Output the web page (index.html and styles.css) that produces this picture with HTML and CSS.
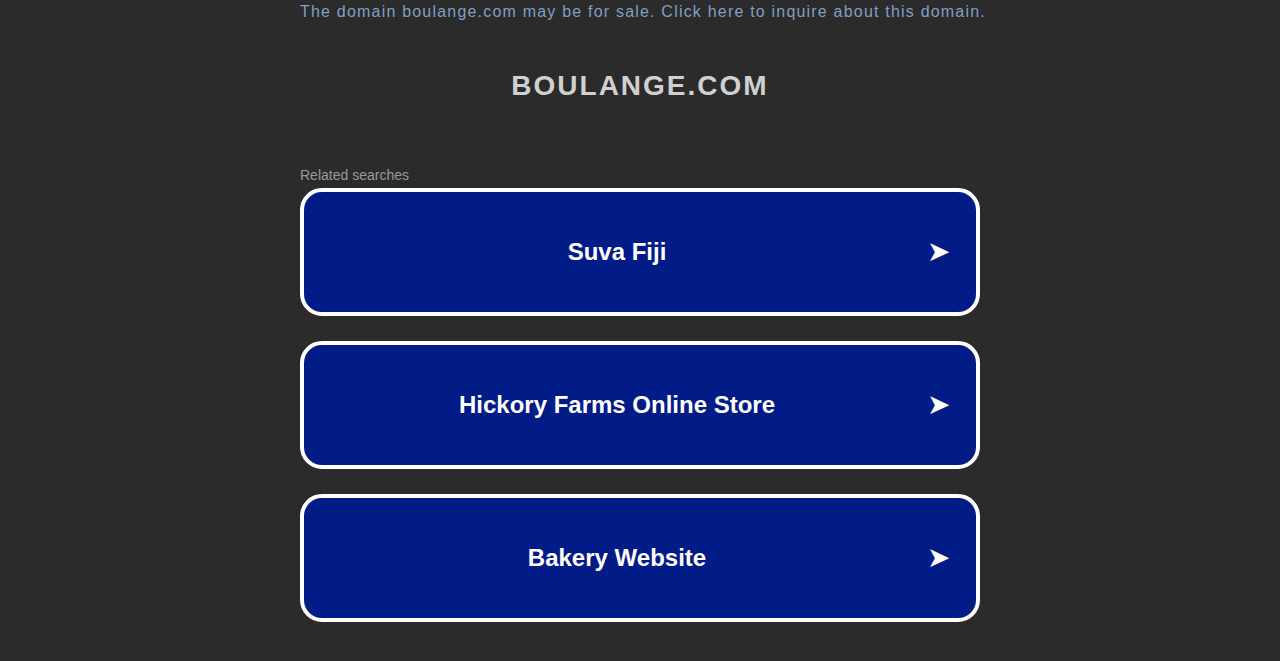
FILE: index.html
```html
<!DOCTYPE html>
<html>
<head>
<meta charset="utf-8">
<link rel="stylesheet" href="styles.css">
</head>
<body>
<div class="page">
  <div class="notice">The domain boulange.com may be for sale. Click here to inquire about this domain.</div>
  <h1 class="title">BOULANGE.COM</h1>
  <div class="related">Related searches</div>
  <div class="list">
    <a class="item"><span class="label">Suva Fiji</span><span class="arrow">➤</span></a>
    <a class="item"><span class="label">Hickory Farms Online Store</span><span class="arrow">➤</span></a>
    <a class="item"><span class="label">Bakery Website</span><span class="arrow">➤</span></a>
  </div>
</div>
</body>
</html>
```
FILE: styles.css
```css
html, body {
  margin: 0;
  padding: 0;
  background: #2b2b2b;
  font-family: "Liberation Sans", Arial, sans-serif;
}
.page {
  width: 680px;
  margin: 0 auto;
}
.notice {
  white-space: nowrap;
  font-size: 16px;
  letter-spacing: 1.2px;
  color: #7f9fc4;
  line-height: 24px;
}
.title {
  margin: 49px 0 0;
  text-align: center;
  font-size: 28px;
  font-weight: bold;
  letter-spacing: 2px;
  color: #d0d0d0;
  line-height: 26px;
}
.related {
  margin-top: 67px;
  font-size: 14px;
  color: #999;
  line-height: 18px;
}
.list {
  display: flex;
  flex-direction: column;
  gap: 25px;
  margin-top: 4px;
}
.item {
  display: flex;
  align-items: center;
  height: 120px;
  border: 4px solid #fff;
  border-radius: 22px;
  background: #011b87;
  color: #fff;
  box-sizing: content-box;
}
.label {
  flex: 1;
  text-align: center;
  font-size: 24px;
  font-weight: bold;
  padding-left: 3px;
}
.arrow {
  font-size: 28px;
  padding-right: 26px;
  line-height: 1;
}
```
